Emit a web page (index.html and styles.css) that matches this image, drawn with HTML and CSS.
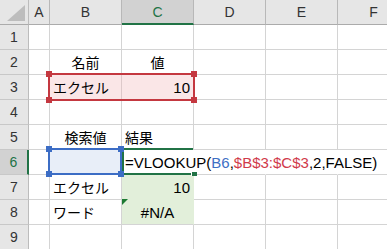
FILE: index.html
```html
<!DOCTYPE html>
<html>
<head>
	<meta charset="utf-8">
	<title>VLOOKUP</title>
	<link rel="stylesheet" href="styles.css">
</head>
<body>
	<div class="sheet">
		<!-- header row -->
		<div class="hd corner"><svg width="28" height="24" viewBox="0 0 28 24"><polygon points="25,5 25,21 7,21" fill="#bdbdbd"/></svg></div>
		<div class="hd col">A</div>
		<div class="hd col">B</div>
		<div class="hd col sel">C</div>
		<div class="hd col">D</div>
		<div class="hd col">E</div>
		<div class="hd col">F</div>

		<div class="hd row">1</div>
		<div class="c"></div><div class="c"></div><div class="c"></div><div class="c"></div><div class="c"></div><div class="c"></div>

		<div class="hd row">2</div>
		<div class="c"></div>
		<div class="c j mid">名前</div>
		<div class="c j mid">値</div>
		<div class="c"></div><div class="c"></div><div class="c"></div>

		<div class="hd row">3</div>
		<div class="c"></div>
		<div class="c j pink split">エクセル</div>
		<div class="c pink end">10</div>
		<div class="c"></div><div class="c"></div><div class="c"></div>

		<div class="hd row">4</div>
		<div class="c"></div><div class="c"></div><div class="c"></div><div class="c"></div><div class="c"></div><div class="c"></div>

		<div class="hd row">5</div>
		<div class="c"></div>
		<div class="c j mid">検索値</div>
		<div class="c j">結果</div>
		<div class="c"></div><div class="c"></div><div class="c"></div>

		<div class="hd row sel">6</div>
		<div class="c"></div>
		<div class="c blue"></div>
		<div class="c editing">=VLOOKUP(<span class="ref-b">B6</span>,<span class="ref-r">$B$3:$C$3</span>,2,FALSE)</div>
		<div class="c under"></div><div class="c under"></div><div class="c under"></div>

		<div class="hd row">7</div>
		<div class="c"></div>
		<div class="c j">エクセル</div>
		<div class="c green keep end">10</div>
		<div class="c"></div><div class="c"></div><div class="c"></div>

		<div class="hd row">8</div>
		<div class="c"></div>
		<div class="c j">ワード</div>
		<div class="c green mid err">#N/A</div>
		<div class="c"></div><div class="c"></div><div class="c"></div>

		<div class="hd row">9</div>
		<div class="c"></div><div class="c"></div><div class="c"></div><div class="c"></div><div class="c"></div><div class="c"></div>

		<!-- reference highlights drawn over the grid -->
		<div class="box box-red"></div>
		<div class="knob red" style="left:46px;top:71px"></div>
		<div class="knob red" style="left:191px;top:71px"></div>
		<div class="knob red" style="left:46px;top:97px"></div>
		<div class="knob red" style="left:191px;top:97px"></div>

		<div class="box box-blue"></div>
		<div class="box box-active"></div>
		<div class="fill-handle"></div>
		<div class="knob blue" style="left:46px;top:146px"></div>
		<div class="knob blue" style="left:118px;top:146px"></div>
		<div class="knob blue" style="left:46px;top:171px"></div>
		<div class="knob blue" style="left:118px;top:171px"></div>
	</div>
</body>
</html>
```

FILE: styles.css
```css
body,html{
	margin: 0;
	padding: 0;
	overflow: hidden;
	background: #fff;
}
*{
	font-family: "Liberation Sans", "Noto Sans CJK JP", sans-serif;
}
.sheet{
	position: relative;
	display: grid;
	grid-template-columns: 29px 21px 72px 72px 72px 72px 72px;
	grid-template-rows: repeat(10, 25px);
	width: 387px;
	height: 249px;
	overflow: hidden;
}
.c,.hd{
	box-sizing: border-box;
	display: flex;
	align-items: center;
	white-space: nowrap;
	border-right: 1px solid #d4d4d4;
	border-bottom: 1px solid #d4d4d4;
}
.c{
	padding: 0 3px;
	font-size: 15px;
	color: #000;
}
.j{
	font-size: 14px;
}
.mid{
	justify-content: center;
}
.end{
	justify-content: flex-end;
}

/* headers */
.hd{
	background: #e6e6e6;
	color: #333;
	font-size: 14px;
	justify-content: center;
}
.corner{
	padding: 0;
	border-right-color: #bcbcbc;
	border-bottom-color: #ababab;
}
.col{
	border-right-color: #b8b8b8;
	border-bottom-color: #ababab;
}
.row{
	border-right-color: #bcbcbc;
	border-bottom-color: #c8c8c8;
}
.col.sel{
	background: #d2d2d2;
	color: #217346;
	border-bottom: 2px solid #217346;
}
.row.sel{
	background: #d2d2d2;
	color: #217346;
	border-right: 2px solid #217346;
}

/* fills */
.pink{
	background: #fae6e7;
}
.pink.split{
	border-right-color: #ddc9ca;
}
.blue{
	background: #e8eef8;
}
.green{
	background: #e2efda;
	border-right-color: #e2efda;
}
.green.keep{
	border-bottom-color: #e2efda;
}
.err{
	position: relative;
}
.err::before{
	content: "";
	position: absolute;
	left: 0;
	top: -1px;
	border-top: 6px solid #1d7a32;
	border-right: 6px solid transparent;
}

/* cell in edit mode, text runs over D6:F6 */
.editing{
	position: relative;
	z-index: 1;
	border-right-color: transparent;
}
.under{
	border-right-color: transparent;
}
.ref-b{
	color: #3e6fc4;
}
.ref-r{
	color: #d03a4a;
}

/* highlight boxes */
.box{
	position: absolute;
	box-sizing: border-box;
	z-index: 2;
}
.box-red{
	left: 48px;
	top: 73px;
	width: 147px;
	height: 28px;
	border: 2px solid #c43840;
}
.box-blue{
	left: 48px;
	top: 148px;
	width: 74px;
	height: 27px;
	border: 2px solid #3c6dc5;
}
.box-active{
	left: 122px;
	top: 148px;
	width: 71px;
	height: 27px;
	border: 2px solid #217346;
	border-right: none;
}
.fill-handle{
	position: absolute;
	z-index: 2;
	left: 191px;
	top: 172px;
	width: 5px;
	height: 4px;
	background: #217346;
	border-left: 1px solid #fff;
}
.knob{
	position: absolute;
	z-index: 3;
	width: 6px;
	height: 6px;
}
.knob.red{
	background: #c43840;
}
.knob.blue{
	background: #3c6dc5;
}
```
